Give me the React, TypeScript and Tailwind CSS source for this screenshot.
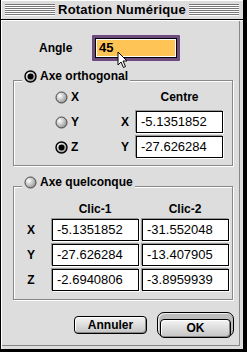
import React from "react"

const Radio = ({ on = false }: { on?: boolean }) => (
  <svg width="13" height="13" viewBox="0 0 13 13" className="shrink-0">
    <defs>
      <radialGradient id="rg" cx="35%" cy="35%" r="75%">
        <stop offset="0" stopColor="#ffffff" />
        <stop offset="1" stopColor="#8a8a8a" />
      </radialGradient>
    </defs>
    <circle cx="6.5" cy="6.5" r="5.5" fill="url(#rg)" stroke={on ? "#000" : "#444"} strokeWidth={on ? 1.4 : 1} />
    {on && <circle cx="6.5" cy="6.5" r="3" fill="#000" />}
  </svg>
)

const Field = ({ value }: { value: string }) => (
  <div className="h-[22px] w-[87px] bg-white border border-black shadow-[1px_1px_0_#fff,-1px_-1px_0_#999] flex items-center pl-[4px] text-[13px] text-black">
    {value}
  </div>
)

const Stripes = () => (
  <div className="flex-1 flex flex-col">
    {[0, 1, 2, 3, 4, 5].map((i) => (
      <div key={i} className="h-[2px] border-t border-[#777] border-b-white bg-white" />
    ))}
  </div>
)

const GroupHead = ({ label, on }: { label: string; on?: boolean }) => (
  <div className="relative z-10 ml-[9px] w-fit h-[14px] px-[2px] bg-[#dddddd] flex items-center gap-[3px]">
    <Radio on={on} />
    <span className="font-bold text-[12px]">{label}</span>
  </div>
)

export default function App() {
  const clics = [
    ["X", "-5.1351852", "-31.552048"],
    ["Y", "-27.626284", "-13.407905"],
    ["Z", "-2.6940806", "-3.8959939"],
  ]

  return (
    <div className="w-[247px] h-[352px] bg-black font-['Liberation_Sans',Arial,sans-serif] text-black">
      <div className="w-[242px] h-[349px] ml-[1px] flex flex-col">
        {/* Title bar */}
        <div className="h-[20px] bg-[#dddddd] border-b border-black shadow-[inset_1px_1px_0_#fff] flex items-center gap-[2px] px-[4px] shrink-0">
          <Stripes />
          <span className="font-bold text-[13px] tracking-[0.2px] leading-none px-[1px]">Rotation Numérique</span>
          <Stripes />
        </div>

        {/* Body */}
        <div className="flex-1 bg-[#dddddd] shadow-[inset_1px_1px_0_#fff,inset_-3px_-3px_0_#dddddd,inset_-4px_-4px_0_#888] pl-[12px] pr-[10px] pt-[15px] flex flex-col">
          {/* Angle */}
          <div className="relative flex items-center pl-[26px]">
            <span className="font-bold text-[12px] w-[53px]">Angle</span>
            <div className="w-[88px] h-[26px] border-[3px] border-[#6e4a7e] rounded-[1px]">
              <div className="w-full h-full border border-black bg-white p-[1px]">
                <div className="w-full h-full bg-[#ffc456] flex items-center pl-[2px] text-[13px] font-bold">45</div>
              </div>
            </div>
            <svg width="12" height="18" viewBox="0 0 12 18" className="absolute left-[104px] top-[16px]">
              <path d="M1 1 L1 14 L4 11 L6.5 16.5 L8.5 15.5 L6 10 L10 10 Z" fill="#fff" stroke="#000" strokeWidth="1" strokeLinejoin="miter" />
            </svg>
          </div>

          {/* Axe orthogonal */}
          <div className="mt-[8px]">
            <GroupHead label="Axe orthogonal" on />
            <div className="-mt-[3px] h-[86px] border border-[#888] shadow-[inset_1px_1px_0_#fff,1px_1px_0_#fff] pt-[5px] pl-[41px]">
              <div className="grid grid-cols-[66px_15px_87px] auto-rows-[22px] gap-y-[3px] items-center text-[12px] font-bold">
                <div className="flex items-center gap-[3px]"><Radio /><span>X</span></div>
                <div />
                <div className="text-center">Centre</div>
                <div className="flex items-center gap-[3px]"><Radio /><span>Y</span></div>
                <div>X</div>
                <div className="font-normal"><Field value="-5.1351852" /></div>
                <div className="flex items-center gap-[3px]"><Radio on /><span>Z</span></div>
                <div>Y</div>
                <div className="font-normal"><Field value="-27.626284" /></div>
              </div>
            </div>
          </div>

          {/* Axe quelconque */}
          <div className="mt-[9px]">
            <GroupHead label="Axe quelconque" />
            <div className="-mt-[3px] h-[114px] border border-[#888] shadow-[inset_1px_1px_0_#fff,1px_1px_0_#fff] pt-[15px]">
              <div className="grid grid-cols-[34px_86px_86px] gap-x-[4px] gap-y-[3px] items-center text-[12px] font-bold">
                <div className="h-[14px]" />
                <div className="text-center leading-[14px]">Clic-1</div>
                <div className="text-center leading-[14px]">Clic-2</div>
                {clics.map(([k, a, b]) => (
                  <React.Fragment key={k}>
                    <div className="text-center">{k}</div>
                    <div className="font-normal"><Field value={a} /></div>
                    <div className="font-normal"><Field value={b} /></div>
                  </React.Fragment>
                ))}
              </div>
            </div>
          </div>

          {/* Buttons */}
          <div className="mt-[12px] -mr-[1px] flex items-center justify-end gap-[10px]">
            <button className="w-[73px] h-[18px] rounded-[4px] border border-black bg-[linear-gradient(#f4f4f4,#c4c4c4)] shadow-[inset_1px_1px_0_#fff,inset_-1px_-1px_0_#888] text-[12px] font-bold leading-none">
              Annuler
            </button>
            <div className="w-[77px] h-[25px] rounded-[7px] border border-black bg-[#bdbdbd] shadow-[inset_1px_1px_0_#eee] p-[2px]">
              <button className="w-full h-full rounded-[4px] border border-black bg-[linear-gradient(#f4f4f4,#c4c4c4)] shadow-[inset_1px_1px_0_#fff,inset_-1px_-1px_0_#888] text-[12px] font-bold leading-none">
                OK
              </button>
            </div>
          </div>
        </div>
      </div>
    </div>
  )
}
